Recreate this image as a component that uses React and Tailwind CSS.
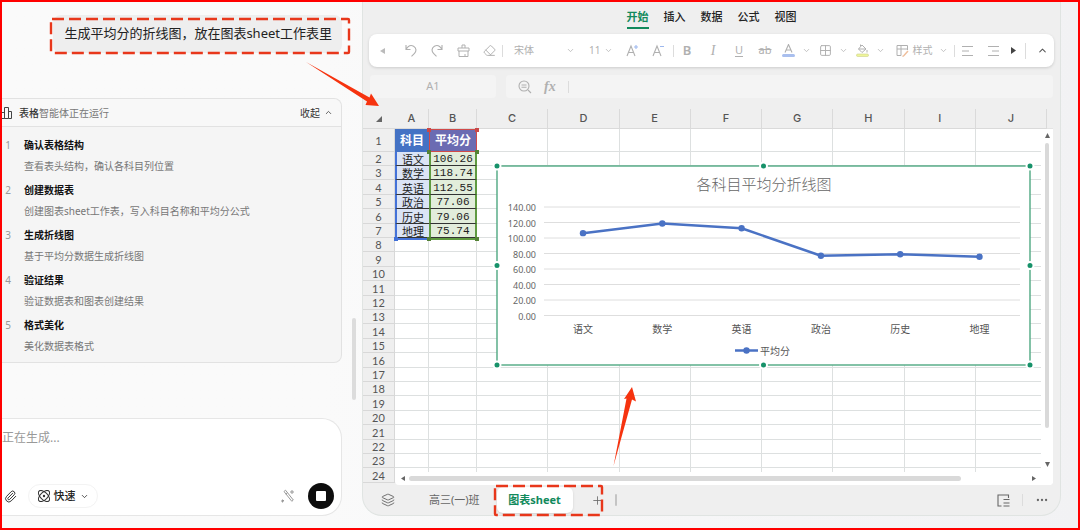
import React from "react";
import {
  Eraser,
  ChevronDown,
  ChevronUp,
  Paperclip,
  Layers,
  Plus,
  Ellipsis,
  Grid2x2,
} from "lucide-react";

const steps = [
  { title: "确认表格结构", desc: "查看表头结构，确认各科目列位置" },
  { title: "创建数据表", desc: "创建图表sheet工作表，写入科目名称和平均分公式" },
  { title: "生成折线图", desc: "基于平均分数据生成折线图" },
  { title: "验证结果", desc: "验证数据表和图表创建结果" },
  { title: "格式美化", desc: "美化数据表格式" },
];

const scores = [
  { name: "语文", avg: 106.26 },
  { name: "数学", avg: 118.74 },
  { name: "英语", avg: 112.55 },
  { name: "政治", avg: 77.06 },
  { name: "历史", avg: 79.06 },
  { name: "地理", avg: 75.74 },
];

const menus = ["开始", "插入", "数据", "公式", "视图"];
const columns = ["A", "B", "C", "D", "E", "F", "G", "H", "I", "J"];
const rows = Array.from({ length: 23 }, (_, i) => i + 2);

const DashedBox = ({ className }) => (
  <svg className={`absolute pointer-events-none overflow-visible ${className}`}>
    <rect width="100%" height="100%" rx="1" fill="none" stroke="#e8371b" strokeWidth="2.4" strokeDasharray="12 5" />
  </svg>
);

const Caret = ({ className = "" }) => (
  <ChevronDown size={9} strokeWidth={2.2} className={`text-[#b8b8b8] ${className}`} />
);

const Sep = ({ className = "" }) => <span className={`w-px h-3 bg-[#dcdcdc] shrink-0 ${className}`} />;

const ToolButton = ({ label, className = "w-[26px]", children }) => (
  <button type="button" aria-label={label} className={`h-6 flex items-center justify-center shrink-0 ${className}`}>
    {children}
  </button>
);

const AgentCard = () => (
  <section className="mt-[45px] mr-[20px] border border-l-0 border-[#e2e2e2] rounded-r-lg bg-[#f5f5f5] text-[10px] leading-[14px]">
    <header className="h-7 flex items-center justify-between border-b border-[#e2e2e2] bg-[#f8f8f8] rounded-tr-lg pr-2">
      <div className="flex items-center">
        <svg width="10" height="12" viewBox="0 0 10 12" fill="none" stroke="#444" strokeWidth="1">
          <path d="M0 5.5H2.5V11.5H0M2.5 11.5V.5H6.5V11.5ZM6.5 4.5H9.5V11.5H6.5" />
        </svg>
        <p className="ml-[7px] text-[#777]">
          <span className="font-medium text-[#333]">表格</span>智能体正在运行
        </p>
      </div>
      <button type="button" className="flex items-center gap-1 text-[#333]">
        收起
        <ChevronUp size={9} />
      </button>
    </header>
    <ol className="flex flex-col gap-[10px] pt-[11px] pb-[9px]">
      {steps.map((step, i) => (
        <li key={step.title} className="flex gap-[13px]">
          <span className="w-[9px] text-right text-[#999]">{i + 1}</span>
          <div className="flex flex-col gap-[7px]">
            <h3 className="font-bold text-[#111]">{step.title}</h3>
            <p className="text-[#777]">{step.desc}</p>
          </div>
        </li>
      ))}
    </ol>
  </section>
);

const Composer = () => (
  <form className="mt-auto mr-[20px] mb-3 h-[98px] bg-white border border-l-0 border-[#e6e6e6] rounded-r-[20px] flex flex-col justify-between pt-[11px] pb-[6px]">
    <textarea
      aria-label="消息"
      placeholder="正在生成..."
      className="w-full h-5 resize-none outline-none text-[12px] leading-4 placeholder:text-[#999]"
    />
    <div className="flex items-center">
      <button type="button" aria-label="附件" className="w-[20px] pl-0.5">
        <Paperclip size={13} strokeWidth={1.8} className="text-[#333]" />
      </button>
      <button type="button" className="ml-1.5 h-6 w-[70px] flex items-center justify-center gap-1 rounded-full border border-[#f3f3f3] text-[11px] font-medium text-[#222]">
        <svg width="12" height="12" viewBox="0 0 12 12" fill="none" stroke="#333" strokeWidth="1">
          <ellipse cx="6" cy="6" rx="7" ry="3.6" transform="rotate(45 6 6)" />
          <ellipse cx="6" cy="6" rx="7" ry="3.6" transform="rotate(-45 6 6)" />
          <circle cx="6" cy="6" r="1.2" fill="#333" stroke="none" />
        </svg>
        快速
        <ChevronDown size={9} />
      </button>
      <button type="button" aria-label="优化提示词" className="ml-auto mr-[13px]">
        <svg width="14" height="14" viewBox="0 0 14 14" fill="none" stroke="#999" strokeWidth="1">
          <path d="M3 2.500l1.500-1.300 7.800 9.800-1.500 1.300ZM4.800 5.200l1.600-1.300M1 13l2-2M1.500 10.500v3M0 12h3M11 1v4M9 3h4" />
        </svg>
      </button>
      <button type="button" aria-label="停止" className="w-[26px] h-[26px] mr-[7px] rounded-full bg-[#0d0d0d] flex items-center justify-center">
        <span className="w-2.5 h-2.5 rounded-[1px] bg-white" />
      </button>
    </div>
  </form>
);

const ChatPane = () => (
  <aside className="relative w-[360px] shrink-0 flex flex-col">
    <div className="relative self-end mt-[13px] mr-[20px] h-[38px] pl-[11px] pr-[10px] rounded-lg bg-[#eeeeee] flex items-center text-[13px] text-[#222]">
      生成平均分的折线图，放在图表sheet工作表里
      <DashedBox className="top-[4px] -left-[2px] w-[298px] h-[34px]" />
    </div>
    <AgentCard />
    <Composer />
    <div className="absolute right-1.5 top-[316px] w-1 h-[82px] rounded-full bg-[#dcdcdc]" />
  </aside>
);

const Toolbar = () => (
  <div className="ml-[6px] mr-[6px] h-[33px] rounded-lg bg-white shadow-[0_1px_3px_rgba(0,0,0,0.15)] flex items-center text-[#b0b0b0] text-[10px] overflow-hidden">
    <ToolButton label="向左滚动">
      <svg width="5" height="6" viewBox="0 0 5 6" fill="#bbb"><path d="M5 0V6L0 3Z" /></svg>
    </ToolButton>
    <ToolButton label="撤销" className="ml-[3px] w-[26px]">
      <svg width="12" height="13" viewBox="0 0 12 13" fill="none" stroke="currentColor" strokeWidth="1.100">
        <path d="M1 1v4.500h4.500M1.200 5.300C3 2 6 .8 8.600 2.200 11.500 4 11.600 7.200 9.500 9.300L6.500 12.300" />
      </svg>
    </ToolButton>
    <ToolButton label="重做">
      <svg width="12" height="13" viewBox="0 0 12 13" fill="none" stroke="currentColor" strokeWidth="1.100">
        <path d="M11 1v4.500H6.500M10.800 5.300C9 2 6 .8 3.400 2.200 .5 4 .4 7.200 2.500 9.300L5.500 12.300" />
      </svg>
    </ToolButton>
    <ToolButton label="格式刷">
      <svg width="13" height="13" viewBox="0 0 13 13" fill="none" stroke="currentColor" strokeWidth="1">
        <path d="M5 4V1h3v3M1 4h11v3H1ZM2 7v5.500h9V7M8 12.500V10" />
      </svg>
    </ToolButton>
    <ToolButton label="清除"><Eraser size={13} strokeWidth={1.8} /></ToolButton>
    <Sep />
    <button type="button" className="w-[78px] pl-[11px] pr-1.5 flex items-center justify-between shrink-0">
      宋体
      <Caret />
    </button>
    <button type="button" className="w-[38px] pl-[8px] pr-[6px] flex items-center justify-between shrink-0">
      11
      <Caret />
    </button>
    <ToolButton label="增大字号">
      <svg width="13" height="13" viewBox="0 0 13 13" fill="none" stroke="currentColor" strokeWidth="1.1">
        <path d="M1 12L5 2l4 10M2.500 8.500h5" />
        <path d="M10 1v4M8 3h4" stroke="#9db8ee" />
      </svg>
    </ToolButton>
    <ToolButton label="减小字号">
      <svg width="13" height="13" viewBox="0 0 13 13" fill="none" stroke="currentColor" strokeWidth="1.1">
        <path d="M1 12L5 2l4 10M2.500 8.500h5" />
        <path d="M8 2.500h4" stroke="#9db8ee" />
      </svg>
    </ToolButton>
    <Sep className="ml-0.5" />
    <ToolButton label="加粗"><span className="text-[13px] font-semibold">B</span></ToolButton>
    <ToolButton label="斜体"><i className="font-['Liberation_Serif',serif] text-[14px]">I</i></ToolButton>
    <ToolButton label="下划线"><u className="text-[11px] underline-offset-2">U</u></ToolButton>
    <ToolButton label="删除线"><s className="text-[11px]">ab</s></ToolButton>
    <ToolButton label="字体颜色" className="w-[37px] gap-[7px]">
      <svg width="13" height="13" viewBox="0 0 13 13" fill="none" stroke="currentColor" strokeWidth="1.1">
        <path d="M3 8.500L6.500 .5l3.500 8M4.200 6h4.600" />
        <rect x="0" y="10" width="13" height="3" rx="1.500" fill="#a9bfee" stroke="none" />
      </svg>
      <Caret />
    </ToolButton>
    <ToolButton label="边框" className="w-[37px] gap-[7px]">
      <Grid2x2 size={13} strokeWidth={1.8} />
      <Caret />
    </ToolButton>
    <ToolButton label="填充颜色" className="w-[37px] gap-[7px]">
      <svg width="13" height="13" viewBox="0 0 13 13" fill="none" stroke="currentColor" strokeWidth="1">
        <path d="M6 1l4 4-4 3.500L2.500 5ZM2.500 5H10M11 6v2.500M4.500 2V.5" />
        <rect x=".5" y="10" width="12" height="2.500" rx="1.200" fill="#eef59a" stroke="#cdd08a" strokeWidth=".6" />
      </svg>
      <Caret />
    </ToolButton>
    <ToolButton label="样式" className="w-[65px] gap-1">
      <svg width="13" height="13" viewBox="0 0 13 13" fill="none" stroke="currentColor" strokeWidth="1">
        <path d="M5 11.500H1V1.500h10.500V6M1 5h10.500M5 1.500v10" />
        <path d="M12 7L8 11.500 6.500 12.500" stroke="#efbf9c" strokeWidth="1.500" />
      </svg>
      样式
      <Caret className="ml-0.5" />
    </ToolButton>
    <div className="ml-auto flex items-center shrink-0">
      <Sep />
      <ToolButton label="左对齐">
        <svg width="12" height="12" viewBox="0 0 12 12" stroke="currentColor"><path d="M0 1.500h11M0 6h7M0 10.500h11" /></svg>
      </ToolButton>
      <ToolButton label="右对齐">
        <svg width="12" height="12" viewBox="0 0 12 12" stroke="currentColor"><path d="M0 1.500h11M4 6h7M0 10.500h11" /></svg>
      </ToolButton>
      <ToolButton label="向右滚动" className="w-[12px]">
        <svg width="5" height="7" viewBox="0 0 5 7" fill="#444"><path d="M0 0V7L5 3.500Z" /></svg>
      </ToolButton>
      <Sep className="ml-[6px] h-4" />
      <ToolButton label="收起工具栏" className="w-[32px]"><ChevronUp size={11} strokeWidth={2.2} className="text-[#555]" /></ToolButton>
    </div>
  </div>
);

const FormulaBar = () => (
  <div className="mt-2 ml-[7px] mr-[7px] flex gap-[10px] h-[23px] text-[#b0b0b0]">
    <input
      aria-label="名称框"
      defaultValue="A1"
      className="w-[126px] rounded bg-[#f4f4f4] text-center text-[11px] outline-none"
    />
    <div className="flex-1 flex items-center rounded bg-[#f4f4f4] pl-3">
      <svg width="14" height="14" viewBox="0 0 14 14" fill="none" stroke="currentColor" strokeWidth="1.100">
        <circle cx="6" cy="6" r="5" />
        <path d="M10 10l3 3M3.500 5h5M3.500 7.200h5" />
      </svg>
      <i className="ml-[12px] font-['Liberation_Serif',serif] text-[14px] font-bold">fx</i>
      <Sep className="ml-3" />
      <input aria-label="公式" className="flex-1 ml-2 bg-transparent outline-none text-[11px]" />
    </div>
  </div>
);

const toY = (value) => 149.5 - value * 0.775;
const toX = (i) => 86 + i * 79.3;

const ScoreChart = () => (
  <svg
    width="533"
    height="199"
    viewBox="0 0 533 199"
    className="absolute left-[134px] top-[57px] overflow-visible bg-white font-['Noto_Sans','Noto_Sans_CJK_SC',sans-serif]"
    role="img"
    aria-label="各科目平均分折线图"
  >
    <text x="267" y="24" textAnchor="middle" fontSize="15" fontWeight="300" fill="#666">各科目平均分折线图</text>
    {[0, 20, 40, 60, 80, 100, 120, 140].map((tick) => (
      <g key={tick}>
        <line x1="47" x2="523" y1={toY(tick)} y2={toY(tick)} stroke="#dedede" />
        <text x="39" y={toY(tick) + 4} textAnchor="end" fontSize="9" fill="#666">{tick.toFixed(2)}</text>
      </g>
    ))}
    <polyline
      points={scores.map((s, i) => `${toX(i)},${toY(s.avg)}`).join(" ")}
      fill="none"
      stroke="#4a72c4"
      strokeWidth="2.500"
      strokeLinejoin="round"
    />
    {scores.map((s, i) => (
      <g key={s.name}>
        <circle cx={toX(i)} cy={toY(s.avg)} r="3.200" fill="#4a72c4" />
        <text x={toX(i)} y="167" textAnchor="middle" fontSize="10" fill="#555">{s.name}</text>
      </g>
    ))}
    <path d="M238 184.500h23" stroke="#4a72c4" strokeWidth="2.500" />
    <circle cx="249.500" cy="184.500" r="3.200" fill="#4a72c4" />
    <text x="263" y="189" fontSize="10" fill="#555">平均分</text>
    <rect width="533" height="199" fill="none" stroke="#4fa882" strokeWidth="1.400" />
    {[[0, 0], [266.5, 0], [533, 0], [0, 99.5], [533, 99.5], [0, 199], [266.5, 199], [533, 199]].map(([x, y]) => (
      <circle key={`${x}-${y}`} cx={x} cy={y} r="3.500" fill="#17926a" stroke="#fff" strokeWidth="2" />
    ))}
  </svg>
);

const Sheet = () => (
  <div className="relative mt-[11px] mr-[7px] h-[376px]">
    <table className="w-full table-fixed border-separate border-spacing-0 text-[12px] leading-none text-[#222]">
      <colgroup>
        <col className="w-[32px]" />
        <col className="w-[34px]" />
        <col className="w-[48px]" />
        {columns.slice(2).map((c) => (
          <col key={c} />
        ))}
        <col className="w-[6px]" />
      </colgroup>
      <thead>
        <tr className="h-5 font-['Inter',sans-serif] text-[11px] text-[#555]">
          <th className="p-0 border-b border-[#dadada]">
            <svg width="6" height="6" viewBox="0 0 6 6" fill="#666" className="mx-auto"><path d="M6 0V6H0Z" /></svg>
          </th>
          {columns.map((c) => (
            <th key={c} scope="col" className="p-0 font-medium border-b border-r border-[#dadada]">{c}</th>
          ))}
          <th className="p-0 border-b border-[#e4e4e4]" />
        </tr>
      </thead>
      <tbody>
        <tr className="h-[23px]">
          <th scope="row" className="p-0 font-['Lato',sans-serif] text-[11px] font-normal text-[#555] border-b border-r border-[#d8d8d8]">1</th>
          <td className="p-0 text-center font-bold text-white bg-[#4472c4]">科目</td>
          <td className="p-0 text-center font-bold text-white bg-[#6b6bb2] border border-[#d04a4a]">平均分</td>
          {columns.slice(2).map((c) => (
            <td key={c} className="p-0 bg-white border-b border-r border-[#dde0e0]" />
          ))}
          <td className="p-0 bg-white" />
        </tr>
        {rows.map((r) => {
          const score = scores[r - 2];
          return (
            <tr key={r} className={r % 5 === 4 || r % 5 === 1 ? "h-[15px]" : "h-[14px]"}>
              <th scope="row" className="p-0 font-['Lato',sans-serif] text-[11px] font-normal text-[#555] border-b border-r border-[#d8d8d8]">{r}</th>
              {score ? (
                <>
                  <td className="p-0 pt-0.5 text-center text-[11px] bg-[#dbe4f5] border-b border-b-[#333] border-l-2 border-l-[#4472d8]">{score.name}</td>
                  <td className="p-0 pt-0.5 text-center bg-[#e2eddb] border-b border-b-[#333] border-x-2 border-x-[#5f9a41] font-['Liberation_Mono',monospace] text-[11px]">
                    {score.avg.toFixed(2)}
                  </td>
                </>
              ) : (
                <>
                  <td className="p-0 bg-white border-b border-r border-[#dde0e0]" />
                  <td className="p-0 bg-white border-b border-r border-[#dde0e0]" />
                </>
              )}
              {columns.slice(2).map((c) => (
                <td key={c} className="p-0 bg-white border-b border-r border-[#dde0e0]" />
              ))}
              <td className="p-0 bg-white" />
            </tr>
          );
        })}
      </tbody>
    </table>

    {/* range handles */}
    <span className="absolute left-[64px] top-[41px] w-1 h-1 bg-[#548235]" />
    <span className="absolute left-[112px] top-[41px] w-1 h-1 bg-[#548235]" />
    <span className="absolute left-[31px] top-[128px] w-1 h-1 bg-[#3f6fd8]" />
    <span className="absolute left-[64px] top-[19px] w-1 h-1 bg-[#c94848]" />
    <span className="absolute left-[112px] top-[19px] w-1 h-1 bg-[#c94848]" />
    <span className="absolute left-[33px] top-[129px] w-[32px] h-0.5 bg-[#4472d8]" />
    <span className="absolute left-[67px] top-[129px] w-[46px] h-0.5 bg-[#5f9a41]" />
    <span className="absolute left-[64px] top-[128px] w-1 h-1 bg-[#548235]" />
    <span className="absolute left-[112px] top-[128px] w-1 h-1 bg-[#548235]" />

    {/* scrollbars */}
    <div className="absolute right-0 top-5 bottom-0 w-3 bg-white rounded-r flex flex-col items-center gap-[5px] pt-1 pb-[18px]">
      <svg width="5" height="5" viewBox="0 0 5 5" fill="#666"><path d="M0 5H5L2.500 0Z" /></svg>
      <div className="w-1 h-[285px] rounded-full bg-[#d9d9d9]" />
      <svg width="5" height="5" viewBox="0 0 5 5" fill="#666" className="mt-auto"><path d="M0 0H5L2.500 5Z" /></svg>
    </div>
    <div className="absolute left-[32px] right-0 bottom-0 h-[13px] bg-white rounded-b flex items-center gap-1 pl-1.5 pr-[17px]">
      <svg width="4" height="5" viewBox="0 0 4 5" fill="#666"><path d="M4 0V5L0 2.500Z" /></svg>
      <div className="w-[87%] h-[5px] rounded-full bg-[#d9d9d9]" />
      <svg width="4" height="5" viewBox="0 0 4 5" fill="#666" className="ml-auto"><path d="M0 0V5L4 2.500Z" /></svg>
    </div>

    <ScoreChart />
  </div>
);

const SheetTabs = () => (
  <footer className="h-[30px] flex items-center text-[11px] text-[#666]">
    <button type="button" aria-label="全部工作表" className="ml-[18px]">
      <Layers size={14} strokeWidth={1.6} />
    </button>
    <button type="button" className="ml-[34px]">高三(一)班</button>
    <div className="relative ml-[15px] pl-0.5 flex items-center">
      <button type="button" className="h-[26px] w-[76px] rounded-md bg-white font-bold text-[#128a5c] shadow-sm">图表sheet</button>
      <button type="button" aria-label="新建工作表" className="ml-[18px]">
        <Plus size={13} strokeWidth={1.5} />
      </button>
      <DashedBox className="-top-[1px] left-0 w-[107px] h-[29px]" />
    </div>
    <span className="ml-[11px] w-[2px] h-3 rounded-full bg-[#c4c4c4]" />
    <button type="button" aria-label="侧边栏" className="ml-auto">
      <svg width="13" height="13" viewBox="0 0 13 13" fill="none" stroke="#666" strokeWidth="1.100">
        <path d="M4.500 12H1V1h10.500v3M6.500 5.500H12.500M6.500 9H12.500M6.500 12H12.500" />
      </svg>
    </button>
    <Sep className="ml-3" />
    <button type="button" aria-label="更多" className="ml-3 mr-[11px]">
      <Ellipsis size={14} />
    </button>
  </footer>
);

const SheetPane = () => (
  <main className="flex-1 min-w-0 mr-[17px] mb-3 border-x border-b border-[#e0e4e2] rounded-b-[20px] bg-[#efefef]">
    <nav className="h-8 flex justify-center items-start gap-[15px] text-[11px] font-medium text-[#222]">
      {menus.map((m, i) => (
        <button
          key={m}
          type="button"
          className={
            i === 0
              ? "h-[27px] pt-1.5 border-b-2 border-[#128a5c] text-[#128a5c] font-bold"
              : "h-[27px] pt-1.5 border-b-2 border-transparent"
          }
        >
          {m}
        </button>
      ))}
    </nav>
    <Toolbar />
    <FormulaBar />
    <Sheet />
    <SheetTabs />
  </main>
);

const App = () => (
  <div className="relative min-h-screen flex border-2 border-[#ff0000] bg-gradient-to-r from-[#fafafa] from-30% to-[#f2f2f4] font-['Noto_Sans','Noto_Sans_CJK_SC',sans-serif]">
    <ChatPane />
    <SheetPane />
    {/* callout arrows */}
    <svg className="absolute left-[303px] top-[58px] pointer-events-none" width="76" height="48" viewBox="0 0 76 48" fill="#f6330f">
      <path d="M1 2L64.500 37.500 66 33.500 74 46 60.500 45 62 41.500Z" />
    </svg>
    <svg className="absolute left-[610px] top-[384px] pointer-events-none" width="26" height="82" viewBox="0 0 26 82" fill="#f6330f">
      <path d="M1.500 80L14.500 12.500 12 13 20 1 24 15.500 20 13.500Z" />
    </svg>
  </div>
);

export default App;
